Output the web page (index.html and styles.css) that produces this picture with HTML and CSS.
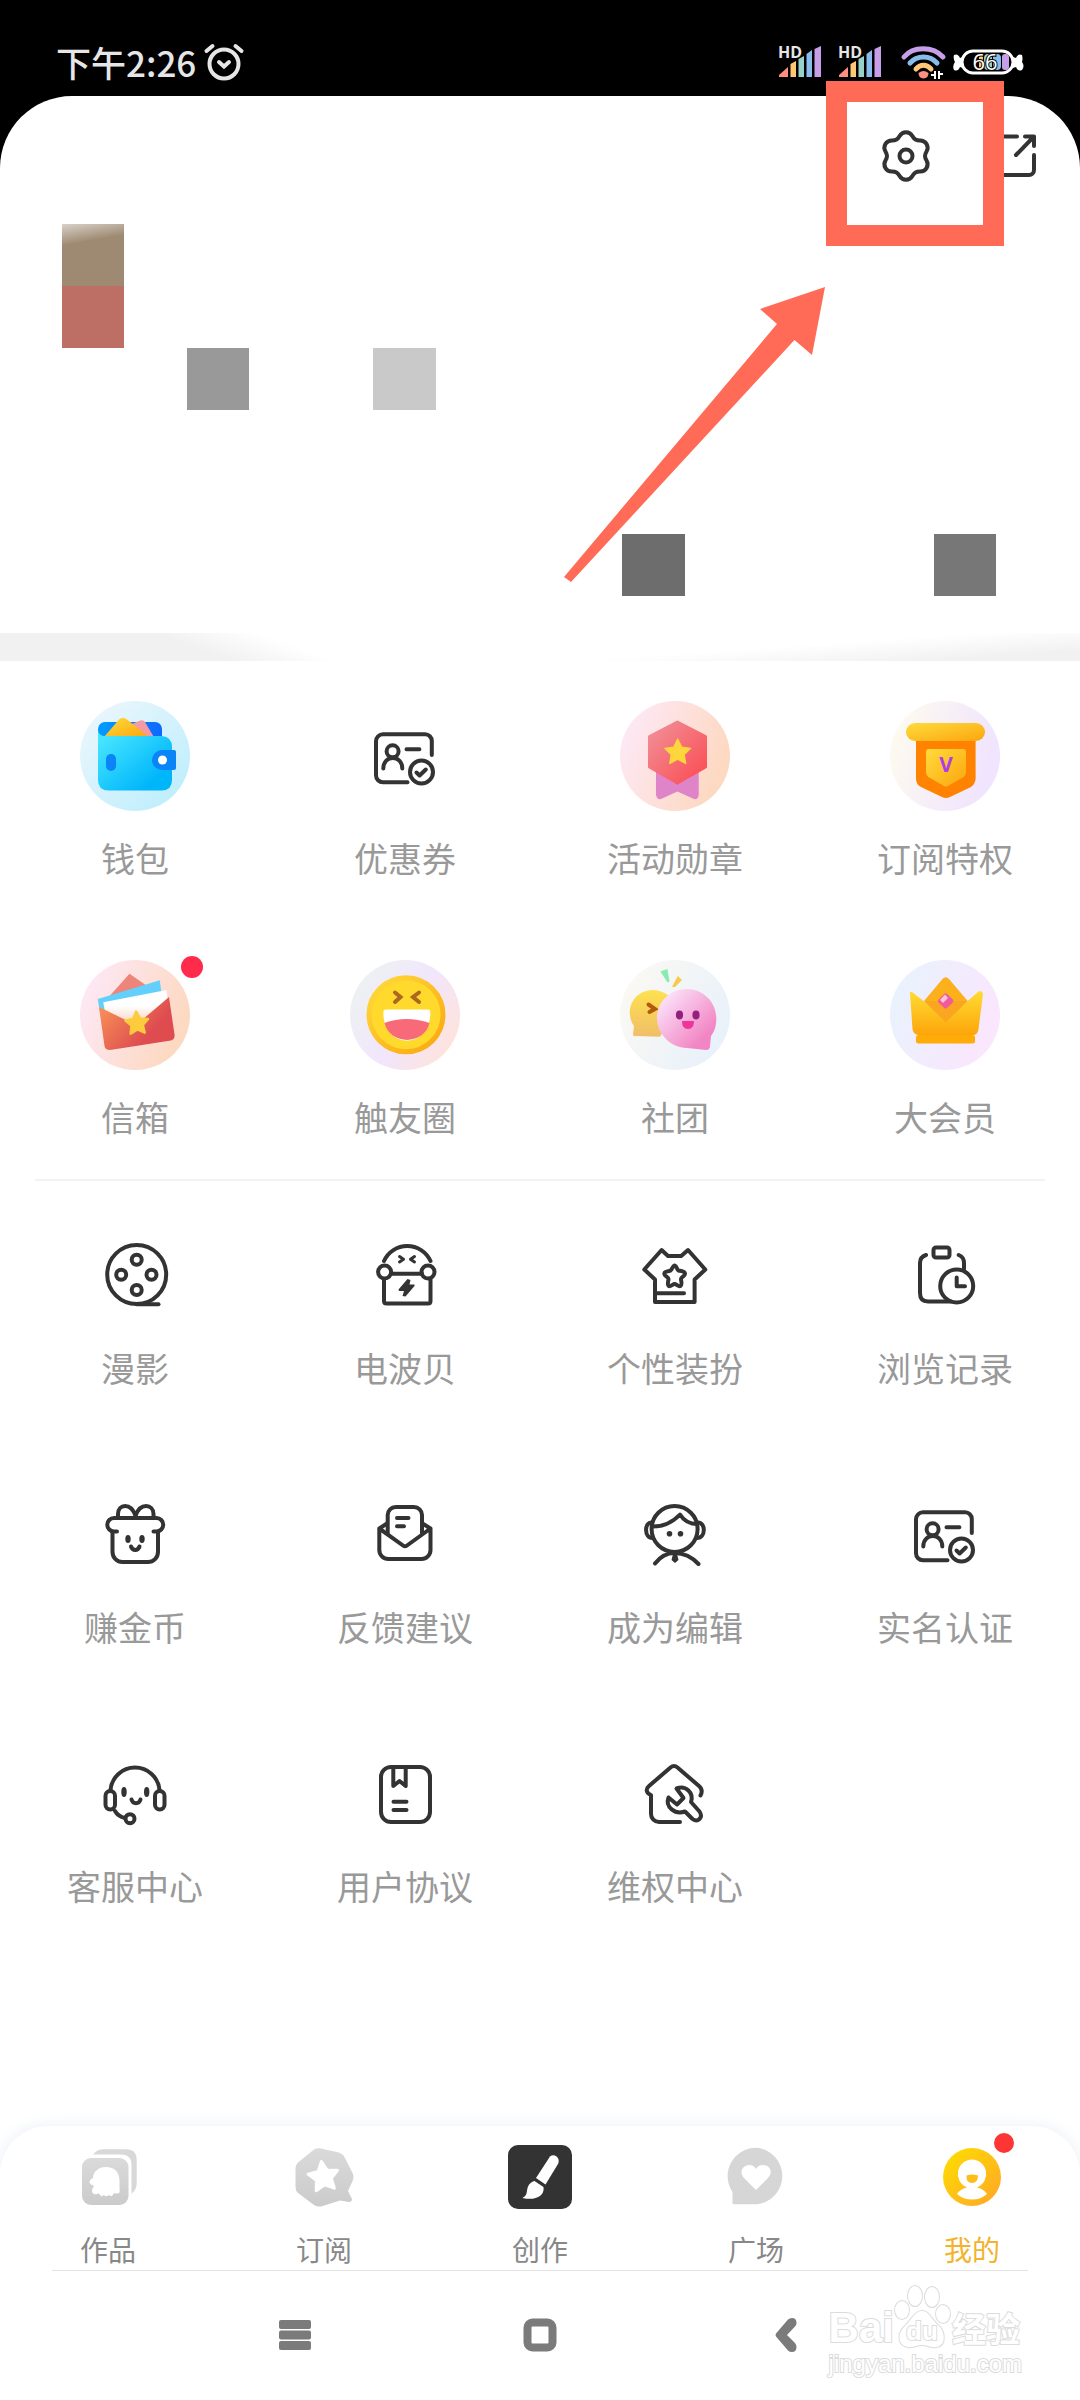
FILE: index.html
```html
<!DOCTYPE html>
<html lang="zh-CN">
<head>
    <meta charset="UTF-8">
    <meta name="viewport" content="width=device-width, initial-scale=1.0">
    <title>我的</title>
    <link rel="stylesheet" href="styles.css">
</head>
<body>

<!-- shared shapes -->
<svg class="defs" width="0" height="0" aria-hidden="true">
    <defs>
        <path id="star" d="M0-10 2.9-4 9.5-3.1 4.8 1.5 5.9 8.1 0 5-5.9 8.1-4.8 1.5-9.5-3.1-2.9-4Z"/>
        <symbol id="idcard" viewBox="0 0 80 80">
            <path d="M66.8 39V25a6.7 6.7 0 0 0-6.7-6.7H18a7 7 0 0 0-7 7V59.3a7 7 0 0 0 7 7H42.5"/>
            <circle cx="27.6" cy="35.3" r="6"/>
            <path d="M18.3 52.5c0-14 19-14 19 0M41.5 33.3H54.4"/>
            <circle cx="56.5" cy="56" r="11.5"/>
            <path d="M51.5 56.5 54.6 59.5 60.8 53.5"/>
        </symbol>
        <symbol id="signal" viewBox="0 0 44 36">
            <path fill="#ff8f80" d="M1 33V31L10 23V33Z"/>
            <path fill="#ffc876" d="M12.500 33V20L18 17V33Z"/>
            <path fill="#96d2c8" d="M20.500 33V15L26 12V33Z"/>
            <path fill="#86bdec" d="M28.500 33V10L34 6V33Z"/>
            <path fill="#c79ee8" d="M36.500 33V5L43 2V33Z"/>
        </symbol>
        <linearGradient id="bgBlue" x2="1" y2="1"><stop stop-color="#f0f7fd"/><stop offset="1" stop-color="#b8edfc"/></linearGradient>
        <linearGradient id="bgPeach" x2="1" y2=".4"><stop stop-color="#fdeafc"/><stop offset="1" stop-color="#fdd9c2"/></linearGradient>
        <linearGradient id="bgLilac" x2="1" y2=".3"><stop stop-color="#fffdee"/><stop offset="1" stop-color="#f0e4fe"/></linearGradient>
        <linearGradient id="bgMist" x2="1" y2=".6"><stop stop-color="#ecf5ee"/><stop offset=".6" stop-color="#f1e6fd"/><stop offset="1" stop-color="#fde3df"/></linearGradient>
        <linearGradient id="bgPale" x2="1" y2=".5"><stop stop-color="#fdfaf2"/><stop offset="1" stop-color="#e9f1fa"/></linearGradient>
        <linearGradient id="bgSky" x2="1" y2=".4"><stop stop-color="#e6f4fd"/><stop offset="1" stop-color="#fae6fd"/></linearGradient>
        <linearGradient id="cyan" x2="1" y2="1"><stop offset=".1" stop-color="#46e4ff"/><stop offset=".8" stop-color="#00b6fa"/></linearGradient>
        <linearGradient id="blue" x2="1"><stop stop-color="#009cff"/><stop offset="1" stop-color="#1068ff"/></linearGradient>
        <linearGradient id="gold" x2="1" y2="1"><stop stop-color="#ffdb3c"/><stop offset="1" stop-color="#fba60e"/></linearGradient>
        <linearGradient id="coral" x2="1" y2="1"><stop stop-color="#f1929a"/><stop offset="1" stop-color="#fb4a50"/></linearGradient>
        <linearGradient id="mailRed" x2="1" y2=".6"><stop stop-color="#fb9a58"/><stop offset=".8" stop-color="#de4c50"/></linearGradient>
        <linearGradient id="letter" x2="0" y2="1"><stop offset=".4" stop-color="#fff"/><stop offset="1" stop-color="#f2c2a8"/></linearGradient>
        <linearGradient id="pink" x2="1" y2="1"><stop offset=".1" stop-color="#fbe4fa"/><stop offset=".8" stop-color="#f285c4"/></linearGradient>
        <linearGradient id="sand" x2="0" y2="1"><stop stop-color="#ffe14f"/><stop offset="1" stop-color="#f0be68"/></linearGradient>
        <linearGradient id="crown" x2="0" y2="1"><stop stop-color="#ffdc32"/><stop offset="1" stop-color="#fda50a"/></linearGradient>
        <linearGradient id="me" x2="1" y2="1"><stop stop-color="#ffdf00"/><stop offset="1" stop-color="#ffa528"/></linearGradient>
        <linearGradient id="grey" x2="0" y2="1"><stop stop-color="#dadada"/><stop offset="1" stop-color="#cbcbcb"/></linearGradient>
    </defs>
</svg>

<header class="status">
    <div class="status-left">
        <span>下午2:26</span>
        <svg width="40" height="38" viewBox="0 0 40 38" fill="none" stroke="#e6e6e6" stroke-width="4" stroke-linecap="round">
            <circle cx="20" cy="21" r="14.500"/>
            <path d="M2.500 8 8.500 3M37.500 8 31.500 3M15 19 20 23.500 25 19"/>
        </svg>
    </div>
    <div class="status-right">
        <div class="signal"><span class="hd">HD</span><svg width="44" height="36"><use href="#signal"/></svg></div>
        <div class="signal"><span class="hd">HD</span><svg width="44" height="36"><use href="#signal"/></svg></div>
        <div class="power">
            <svg width="48" height="36" viewBox="0 0 48 36" fill="none" stroke-width="5" stroke-linecap="round">
                <path stroke="#c79ee8" d="M6 13C15 2 35 2 45 13"/>
                <path stroke="#86bdec" d="M12 19C19 11 32 11 39 19"/>
                <path stroke="#ffc876" d="M18 25C22 20 29 20 33 25"/>
                <path fill="#ff8f80" d="M20.500 29q5-4 10 0q0 5-5 5.500q-5-.5-5-5.500"/>
                <path stroke="#fff" stroke-width="2" stroke-linecap="butt" d="M33 31H37V35M37 35V27M41 35V27M41 30H45"/>
            </svg>
            <svg width="72" height="30" viewBox="0 0 72 30">
                <path fill="#fff" d="M11 10 8 11Q6 6 2 8Q1 12 3 15Q0 19 2 23Q6 25 8 20L11 21ZM61 10 64 11Q66 6 70 8Q71 12 70 15Q73 19 70 23Q66 25 64 20L61 21Z"/>
                <rect x="10" y="4" width="51" height="22" rx="11" fill="#000" stroke="#fff" stroke-width="3"/>
                <rect x="27" y="7" width="4" height="16" rx="2" fill="#ffc876"/>
                <rect x="32" y="7" width="8" height="16" rx="4" fill="#96d2c8"/>
                <rect x="41" y="7" width="8" height="16" rx="4" fill="#86bdec"/>
                <rect x="50" y="7" width="7" height="16" rx="3" fill="#c79ee8"/>
                <text x="33" y="23" class="battery-text">66</text>
            </svg>
        </div>
    </div>
</header>

<main class="page">
    <section class="profile">
        <div class="actions">
            <button class="icon-button" aria-label="设置">
                <svg class="line" width="56" height="56" viewBox="-28 -28 56 56">
                    <path d="M0-23.800C7-23.800 5.200-19 9.500-16.500S17.100-18 20.600-11.900 19-5 19 0 24.100 5.800 20.600 11.900 13.800 14 9.500 16.500 7 23.800 0 23.800-5.200 19-9.500 16.500-17.100 18-20.600 11.900-19 5-19 0-24.100-5.800-20.600-11.900-13.800-14-9.500-16.500-7-23.800 0-23.800Z"/>
                    <circle r="6.500"/>
                </svg>
            </button>
            <button class="icon-button" aria-label="分享">
                <svg class="line" width="48" height="56" viewBox="0 0 48 56">
                    <path d="M27 8.500H9a5 5 0 0 0-5 5V42a5 5 0 0 0 5 5H39a5 5 0 0 0 5-5V27M35 8.500H44V18M44 8.500 26 27"/>
                </svg>
            </button>
        </div>
        <div class="mosaic">
            <span class="tile tan"></span>
            <span class="tile red"></span>
            <span class="tile name"></span>
            <span class="tile level"></span>
            <span class="tile follow"></span>
            <span class="tile fans"></span>
        </div>
        <div class="highlight"></div>
        <svg class="arrow" width="262" height="296" viewBox="0 0 262 296">
            <path fill="#ff6b57" d="M0 290 213 37 196 22 261 0 248 68 230.500 53 7 295Z"/>
        </svg>
    </section>

    <div class="strip"></div>

    <nav class="menu menu-color">
        <a class="item" href="#">
            <svg width="110" height="110" viewBox="0 0 110 110">
                <circle cx="55" cy="55" r="55" fill="url(#bgBlue)"/>
                <rect x="18" y="21" width="64" height="30" rx="7" fill="url(#blue)"/>
                <path fill="#f59aa4" d="M52 23 59 20Q63 18 65 21L75 38H52Z"/>
                <path fill="url(#gold)" d="M24 36 39 18.500Q43 15 47 18.500L69 36Z"/>
                <path fill="url(#cyan)" d="M18 29Q19 35 25 35H82Q92 36 92 46V79Q92 89 82 89.500H28Q18 89 18 79Z"/>
                <path fill="#0a84f6" d="M82 49H94Q96 49 96 51V67Q96 69 94 69H82a10 10 0 0 1 0-20Z"/>
                <circle cx="82.500" cy="59" r="4.500" fill="#fff"/>
                <rect x="26" y="53" width="10" height="17" rx="5" fill="#0a84f6"/>
            </svg>
            <span class="label">钱包</span>
        </a>
        <a class="item" href="#">
            <svg class="line" width="110" height="110" viewBox="-15 -15 110 110"><use href="#idcard" width="80" height="80"/></svg>
            <span class="label">优惠券</span>
        </a>
        <a class="item" href="#">
            <svg width="110" height="110" viewBox="0 0 110 110">
                <circle cx="55" cy="55" r="55" fill="url(#bgPeach)"/>
                <path fill="#df84c8" d="M36 60H78.700V94Q78 99 74 98L57.400 90.500 41 98Q37 99 36 94Z"/>
                <path fill="url(#coral)" stroke="url(#coral)" stroke-width="3" stroke-linejoin="round" d="M57.400 21 85.500 35.500V66L57.400 82 29.500 66V35.500Z"/>
                <use href="#star" transform="translate(57.700 51.500) scale(1.350)" fill="#fdd63c" stroke="#fdd63c" stroke-linejoin="round"/>
            </svg>
            <span class="label">活动勋章</span>
        </a>
        <a class="item" href="#">
            <svg width="110" height="110" viewBox="0 0 110 110">
                <circle cx="55" cy="55" r="55" fill="url(#bgLilac)"/>
                <path fill="#ff8200" d="M26 36H85.600V78Q85 83 81 86L60 96Q56 98 52 96L31 86Q26 83 26 78Z"/>
                <rect x="16" y="22" width="79" height="18" rx="9" fill="url(#gold)"/>
                <path fill="url(#gold)" d="M39 48H73Q76 48 76 51V71Q76 75 72 77L58 85Q56 86 54 85L40 77Q36 75 36 71V51Q36 48 39 48Z"/>
                <text x="56" y="71" class="privilege-text">V</text>
            </svg>
            <span class="label">订阅特权</span>
        </a>
        <a class="item" href="#">
            <svg width="110" height="110" viewBox="0 0 110 110">
                <circle cx="55" cy="55" r="55" fill="url(#bgPeach)"/>
                <path fill="#ee857a" d="M49.500 13.700 26 40 80 35Z"/>
                <path fill="#62d0fb" d="M17.800 39 79.800 20.300 83 45 22 65Z"/>
                <path fill="url(#letter)" d="M23.300 42.300 86.700 30 89 60 28 70Z"/>
                <path fill="url(#mailRed)" d="M19 47 50 62Q56 63 62 60L89 37 94.600 75Q95 79 91 80.500L30 90Q25 90 24.500 86Z"/>
                <use href="#star" transform="translate(57 63.500) rotate(-4) scale(1.200)" fill="#fccc3c" stroke="#fccc3c" stroke-width="2" stroke-linejoin="round"/>
            </svg>
            <span class="dot"></span>
            <span class="label">信箱</span>
        </a>
        <a class="item" href="#">
            <svg width="110" height="110" viewBox="0 0 110 110">
                <circle cx="55" cy="55" r="55" fill="url(#bgMist)"/>
                <circle cx="56" cy="54.700" r="37" fill="#ffd92b" stroke="url(#gold)" stroke-width="5"/>
                <path fill="none" stroke="#ab681e" stroke-width="4" stroke-linecap="round" d="M45 32.500 50.500 37 45 42M69 32.500 63 37 69 42"/>
                <path fill="#fff" d="M36 49.500H78Q80.400 49.500 80.400 52.500C80 90 33.500 90 33.300 52.500Q33.300 49.500 36 49.500Z"/>
                <path fill="#f96a78" d="M34.500 63Q56 55 79.500 63C74 85.500 40 85.500 34.500 63Z"/>
            </svg>
            <span class="label">触友圈</span>
        </a>
        <a class="item" href="#">
            <svg width="110" height="110" viewBox="0 0 110 110">
                <circle cx="55" cy="55" r="55" fill="url(#bgPale)"/>
                <path fill="#86ecb0" d="M40.500 11.500 47.400 9 49.500 21.500 47.500 22.500Z"/>
                <path fill="#f8c94a" d="M57.700 16 62 20 55 27 52 27Z"/>
                <path fill="url(#sand)" d="M33 30C10 31 5 54 14 66L13 74Q13 77 16 76L40 76.700 56 50Q52 31 33 30Z"/>
                <path fill="none" stroke="#b25a0e" stroke-width="4" stroke-linecap="round" d="M28.500 44.500 35 49 29.500 52"/>
                <path fill="url(#pink)" d="M67 29C50 29 37 42 37 58S51 88 67 88L86 90Q90 90 90 86L91 76C95 71 96.300 65 96.300 58 96.300 42 83 29 67 29Z"/>
                <ellipse cx="59.500" cy="55" rx="3.600" ry="4.400" fill="#93207f"/>
                <ellipse cx="76" cy="55" rx="3.600" ry="4.400" fill="#93207f"/>
                <path fill="#f0359a" d="M62 61H74Q74 69 68 69T62 61Z"/>
            </svg>
            <span class="label">社团</span>
        </a>
        <a class="item" href="#">
            <svg width="110" height="110" viewBox="0 0 110 110">
                <circle cx="55" cy="55" r="55" fill="url(#bgSky)"/>
                <path fill="url(#crown)" d="M20 33Q20 31 22 32L40 46H72L88 32Q92 29 93 34L88.500 69Q88 74 84 75H28Q23 74 22.500 69Z"/>
                <rect x="26" y="75" width="59" height="8.500" rx="2.500" fill="#ffab08"/>
                <path fill="#fbb01c" d="M52.500 19Q55.700 15.500 59 19L77.700 41 55.700 62.300 34 41Z"/>
                <path fill="#f9982a" d="M34 41H77.700L55.700 62.300Z" opacity=".4"/>
                <rect x="-6" y="-6" width="12" height="12" rx="2" transform="translate(55.700 41) rotate(45)" fill="#ee5a9c"/>
                <path fill="#fbc4d8" d="M50 40 55 34.500 58 38 53 43Z"/>
            </svg>
            <span class="label">大会员</span>
        </a>
    </nav>

    <hr class="divider">

    <nav class="menu menu-line">
        <a class="item" href="#">
            <svg class="line" width="80" height="80" viewBox="0 0 80 80">
                <circle cx="41.700" cy="39.500" r="29.500"/>
                <circle cx="41.700" cy="24.700" r="5"/><circle cx="26.200" cy="39.700" r="5"/>
                <circle cx="56.500" cy="39.700" r="5"/><circle cx="41.700" cy="55" r="5"/>
                <path d="M41.700 69.300H63.500"/>
            </svg>
            <span class="label">漫影</span>
        </a>
        <a class="item" href="#">
            <svg class="line" width="80" height="80" viewBox="0 0 80 80">
                <path d="M19 26A25.500 25.500 0 0 1 65.500 26M26 38.700H57M19 44V66Q19 68.500 21.500 68.500H63Q65.500 68.500 65.500 66V44"/>
                <circle cx="19.600" cy="37" r="6.500"/><circle cx="63" cy="37" r="6.500"/>
                <path stroke-width="3" d="M34.500 21.500 38.500 24.300 34.500 27M49.500 21.500 45.500 24.300 49.500 27"/>
                <path class="solid" d="M42.500 44 33.500 54.500 34 56H39L37.500 61 40.500 61.500 49.500 51V49.500H44.500L45.500 45Z"/>
            </svg>
            <span class="label">电波贝</span>
        </a>
        <a class="item" href="#">
            <svg class="line" width="80" height="80" viewBox="0 0 80 80">
                <path d="M26.600 15 33 21H46.200L53 15 70.300 34.500 59.600 44.500V67H20V44.500L9.300 34.500ZM20 58.300H49"/>
                <path d="M39.600 30.500C42 31 42 35 43.500 35.500S49.500 36 50 38.500 46 42 46 44 47.500 50 45.500 51 41.500 49 39.600 49 35.500 52 33.700 51 33.500 46 33.500 44 29 41 29.300 38.500 34 36.500 35.500 35.500 37.500 31 39.600 30.500Z"/>
            </svg>
            <span class="label">个性装扮</span>
        </a>
        <a class="item" href="#">
            <svg class="line" width="80" height="80" viewBox="0 0 80 80">
                <rect x="28.500" y="12.500" width="16" height="10" rx="2.500"/>
                <path d="M21 20Q15 22 15 28V58Q15 66.500 23 66.500H46M53.700 20Q59 22 59 28V34"/>
                <circle cx="51.700" cy="51" r="16.500"/>
                <path d="M51.700 42.500V51.300H60"/>
            </svg>
            <span class="label">浏览记录</span>
        </a>
        <a class="item" href="#">
            <svg class="line" width="80" height="80" viewBox="0 0 80 80">
                <path d="M23 23V20C23 10 36 8 40.500 22C45 8 58.500 10 58.500 20V23"/>
                <path d="M22 37.500H19a6.700 6.700 0 0 1 0-13.500H61.500a6.700 6.700 0 0 1 0 13.500H58.500"/>
                <path d="M17.500 38V58a10 10 0 0 0 10 10H53a10 10 0 0 0 10-10V38M36 52.500C37.500 57 43 57 44.500 52.500"/>
                <ellipse class="solid" cx="33" cy="45" rx="2.700" ry="4"/><ellipse class="solid" cx="47" cy="45" rx="2.700" ry="4"/>
            </svg>
            <span class="label">赚金币</span>
        </a>
        <a class="item" href="#">
            <svg class="line" width="80" height="80" viewBox="0 0 80 80">
                <path d="M22.700 39V21a8 8 0 0 1 8-8H49a8 8 0 0 1 8 8V39"/>
                <path d="M14.300 34.500V56a9 9 0 0 0 9 9H56.500a9 9 0 0 0 9-9V34.500L42 51.500Q40 53 38 51.500ZM14.300 34.500 22 29.500M65.500 34.500 57.500 29.500"/>
                <path d="M32 24H43.500M32 32.300H39"/>
            </svg>
            <span class="label">反馈建议</span>
        </a>
        <a class="item" href="#">
            <svg class="line" width="80" height="80" viewBox="0 0 80 80">
                <circle cx="39.600" cy="35" r="23"/>
                <path d="M17 28.500C9 28 9 44 17.500 44M62.500 28.500C71 28 71 44 62 44"/>
                <path d="M17.500 32.500C28 32.500 38 28 45 20.500C49 27 55 30 62 30M20 69.500Q28 59 39.600 59Q53 59 63.500 70"/>
                <circle class="solid" cx="34.500" cy="39.700" r="2.800"/><circle class="solid" cx="45.500" cy="39.700" r="2.800"/>
                <path class="solid" d="M38 60H42L43.500 66 40 69 36.500 66Z"/>
            </svg>
            <span class="label">成为编辑</span>
        </a>
        <a class="item" href="#">
            <svg class="line" width="80" height="80"><use href="#idcard"/></svg>
            <span class="label">实名认证</span>
        </a>
        <a class="item" href="#">
            <svg class="line" width="80" height="80" viewBox="0 0 80 80">
                <path d="M15.500 37A24.600 24.600 0 0 1 64.500 37M20 58Q23 63.500 30 65"/>
                <rect x="10.500" y="38" width="9.500" height="18.500" rx="4.700"/><rect x="60" y="38" width="9.500" height="18.500" rx="4.700"/>
                <circle cx="35" cy="65.700" r="4.500"/>
                <path d="M36.500 46.500C38 51.500 44 51.500 45.500 46.500"/>
                <ellipse class="solid" cx="29" cy="39" rx="2.700" ry="5"/><ellipse class="solid" cx="51.700" cy="39" rx="2.700" ry="5"/>
            </svg>
            <span class="label">客服中心</span>
        </a>
        <a class="item" href="#">
            <svg class="line" width="80" height="80" viewBox="0 0 80 80">
                <rect x="16" y="14" width="49" height="55" rx="10"/>
                <path d="M28.300 15V33L34.500 28 40.700 33V15M28.500 48.700H41.500M28.500 57H41.500"/>
            </svg>
            <span class="label">用户协议</span>
        </a>
        <a class="item" href="#">
            <svg class="line" width="80" height="80" viewBox="0 0 80 80">
                <path d="M45 69H24a8 8 0 0 1-8-8V42C11 40 10.500 36 14 33L35.500 14.500Q39 11.500 42.500 14.500L64 33Q68.500 37 65.500 42.500"/>
                <path d="M41.500 35.500C51 32 59 40 56 49L64.500 58.500Q67.500 63 64.500 66T57.500 66L50 58.500C40 62 30 54 33.500 44.500L42 51.500 48.500 45Z"/>
            </svg>
            <span class="label">维权中心</span>
        </a>
    </nav>
</main>

<footer class="bottom">
    <nav class="tabs">
        <a class="tab" href="#">
            <svg width="64" height="64" viewBox="0 0 64 64">
                <path fill="#d8d8d8" d="M17 9.500Q21 4.300 28 4.300H50Q60.700 4.300 60.700 15V38Q60.700 45 55.500 48.500V20Q55.500 9.500 45 9.500Z"/>
                <rect x="6" y="13" width="46.500" height="47" rx="9" fill="url(#grey)"/>
                <path fill="#fff" d="M30 22C21 22 17 28 17 33Q11 36 15 39.500L18 41Q14 47 18 49Q21 50 23 48Q24 53 28 50Q30 52.500 33 50Q36 53 38 48Q45 50 43.500 44V36Q43 22 30 22Z"/>
            </svg>
            <span class="tab-label">作品</span>
        </a>
        <a class="tab" href="#">
            <svg width="64" height="64" viewBox="0 0 64 64">
                <path fill="url(#grey)" d="M22 4.500Q25 2.500 29 3.500L47 7.500Q51 9 53 13L61 29Q62 32 61 35L56 46 60 54Q60 57 57 57L48 55.500 29 61.500Q25 62 22 60L6 48Q3.500 46 3.500 42V23Q3.500 20 6 17.500Z"/>
                <use href="#star" transform="translate(31.500 32) rotate(-8) scale(1.550)" fill="#fff" stroke="#fff" stroke-width="2" stroke-linejoin="round"/>
            </svg>
            <span class="tab-label">订阅</span>
        </a>
        <a class="tab" href="#">
            <svg width="64" height="64" viewBox="0 0 64 64">
                <rect width="64" height="64" rx="10" fill="#333"/>
                <path fill="#fff" d="M42 11.500Q45 9 48.500 11.500T50 19L37.500 39.500 28 33Z"/>
                <path fill="#fff" d="M26.500 36 35.500 42C37 51 27 56 14.500 53C20 50 18 47 20 41.500Q22 37 26.500 36Z"/>
            </svg>
            <span class="tab-label">创作</span>
        </a>
        <a class="tab" href="#">
            <svg width="64" height="64" viewBox="0 0 64 64">
                <path fill="#d6d6d6" d="M32.300 2.700a28.400 28.400 0 0 1 0 56.600H9.500Q8.500 59.300 8.500 58V47A28.400 28.400 0 0 1 32.300 2.700Z"/>
                <path fill="#fff" d="M32 45 20 33C14 26 20 20 25 20Q30 20 32 24Q34 20 39 20C45 20 50 26 44 33Z"/>
            </svg>
            <span class="tab-label">广场</span>
        </a>
        <a class="tab active" href="#">
            <svg width="64" height="64" viewBox="0 0 64 64">
                <circle cx="32" cy="32" r="29" fill="url(#me)"/>
                <path fill="#fff" d="M32 14.500a14.500 14.500 0 0 1 5 28Q44 44 47 49 41 54.500 32 54.500T17 49Q20 44 27 42.500A14.500 14.500 0 0 1 32 14.500Z"/>
                <path fill="#fdbd1a" d="M26.500 30.500Q32 28.500 38 30.500Q38 38 32 38T26.500 30.500Z"/>
            </svg>
            <span class="tab-dot"></span>
            <span class="tab-label">我的</span>
        </a>
    </nav>
    <div class="system">
        <button class="icon-button" aria-label="最近任务">
            <svg width="34" height="34" viewBox="0 0 34 34" fill="#7b7b7b">
                <rect x="1" y="2" width="32" height="9" rx="2"/><rect x="1" y="12.500" width="32" height="9" rx="2"/><rect x="1" y="23" width="32" height="9" rx="2"/>
            </svg>
        </button>
        <button class="icon-button" aria-label="主屏幕">
            <svg width="34" height="34" viewBox="0 0 34 34">
                <rect x="4.500" y="4.500" width="25" height="25" rx="5" fill="none" stroke="#7b7b7b" stroke-width="8"/>
            </svg>
        </button>
        <button class="icon-button" aria-label="返回">
            <svg width="34" height="34" viewBox="0 0 34 34">
                <path fill="#7b7b7b" d="M20 1.500Q21.500 0 24 0 28.500 0 28.500 5 28.500 7 27 8.500L19 17 27 25Q28.500 27 28.500 29 28.500 34 24 34 21.500 34 20 32.500L8 18.500Q7 17 8 15.500Z"/>
            </svg>
        </button>
        <div class="watermark">
            <div class="brand">
                <span class="bai">Bai</span>
                <svg width="58" height="66" viewBox="0 0 58 66" fill="#fff" stroke="#dcdcdc" stroke-width="2">
                    <ellipse cx="8" cy="26" rx="7" ry="9"/><ellipse cx="21" cy="12" rx="7" ry="10"/>
                    <ellipse cx="38" cy="13" rx="7" ry="10"/><ellipse cx="49" cy="30" rx="7" ry="9"/>
                    <path d="M28 27C35 27 37 35 44 41S53 62 42 63C36 64 34 61 28 61S20 64 14 63C3 61 3 49 12 41C18 35 21 27 28 27Z"/>
                    <text x="28" y="56" class="du">du</text>
                </svg>
                <span class="jingyan">经验</span>
            </div>
            <span class="url">jingyan.baidu.com</span>
        </div>
    </div>
</footer>

</body>
</html>
```
FILE: styles.css
```css
* {
    box-sizing: border-box;
}
body {
    margin: 0;
    min-height: 100vh;
    display: flex;
    flex-direction: column;
    background-color: #fff;
    font-family: "Noto Sans CJK SC", "Noto Sans", sans-serif;
}
svg {
    display: block;
    overflow: visible;
}
.defs {
    position: absolute;
}

/* status bar, its black runs on behind the rounded page corners */
.status {
    display: flex;
    justify-content: space-between;
    align-items: center;
    padding: 38px 56px 82px;
    background-color: #000;
    color: #e6e6e6;
}
.status-left {
    display: flex;
    align-items: center;
    gap: 8px;
    font-size: 35px;
    font-weight: 500;
    line-height: 48px;
}
.status-right {
    display: flex;
    align-items: center;
    gap: 16px;
}
.signal {
    position: relative;
}
.hd {
    position: absolute;
    top: 0;
    left: 0;
    font: bold 16px/16px "Open Sans", sans-serif;
}
.power {
    display: flex;
    align-items: center;
    gap: 6px;
}
.battery-text {
    font: 22px "Open Sans", sans-serif;
    fill: #fff;
    stroke: #000;
    stroke-width: 2px;
    paint-order: stroke;
    text-anchor: middle;
}

/* profile */
.page {
    flex: 1 0 auto;
    margin-top: -72px;
    background-color: #fff;
    border-radius: 72px 72px 0 0;
}
.profile {
    position: relative;
    padding: 32px 0 37px;
}
.actions {
    display: flex;
    justify-content: flex-end;
    gap: 56px;
    padding-right: 42px;
}
.icon-button {
    padding: 0;
    border: none;
    background: none;
    cursor: pointer;
}
.line {
    fill: none;
    stroke: #333;
    stroke-width: 4px;
    stroke-linecap: round;
    stroke-linejoin: round;
}
.solid {
    fill: #333;
    stroke: none;
}
.mosaic {
    display: grid;
    grid-template-columns: repeat(17, 1fr);
    grid-template-rows: repeat(6, 62px);
    margin-top: 40px;
    padding-right: 22px;
}
.tan {
    grid-area: 1 / 2;
    background: linear-gradient(170deg, #d9d2c9, #9e8a72 30%);
}
.red {
    grid-area: 2 / 2;
    background-color: #be6f65;
}
.name {
    grid-area: 3 / 4;
    background-color: #999;
}
.level {
    grid-area: 3 / 7;
    background-color: #c9c9c9;
}
.follow {
    grid-area: 6 / 11;
    background-color: #6d6d6d;
}
.fans {
    grid-area: 6 / 16;
    background-color: #777;
}
.highlight {
    position: absolute;
    top: -15px;
    right: 76px;
    width: 178px;
    height: 165px;
    border: 21px solid #ff6b57;
    pointer-events: none;
}
.arrow {
    position: absolute;
    top: 191px;
    right: 254px;
}
.strip {
    height: 28px;
    background:
        linear-gradient(20deg, #f1f1f1 20%, transparent 29%),
        linear-gradient(176deg, transparent 66%, #f1f1f1 90%);
}

/* menus */
.menu {
    display: grid;
    grid-template-columns: repeat(4, 1fr);
}
.menu-color {
    padding: 40px 0 38px;
    row-gap: 78px;
}
.menu-line {
    padding: 54px 0;
    row-gap: 102px;
}
.item {
    position: relative;
    display: flex;
    flex-direction: column;
    align-items: center;
    gap: 23px;
    color: #999;
    text-decoration: none;
}
.menu-line .item {
    gap: 29px;
}
.label {
    font-size: 34px;
    line-height: 48px;
}
.dot {
    position: absolute;
    top: -4px;
    left: calc(50% + 46px);
    width: 22px;
    height: 22px;
    border-radius: 50%;
    background-color: #ff2b4b;
}
.divider {
    height: 2px;
    margin: 0 35px;
    border: none;
    background-color: #f2f2f2;
}
.privilege-text {
    font: bold 21px "Open Sans", sans-serif;
    fill: #b03ce8;
    text-anchor: middle;
}

/* bottom bar */
.bottom {
    background-color: #fff;
    border-radius: 48px 48px 0 0;
    box-shadow: 0 0 16px #e9eef4;
}
.tabs {
    display: grid;
    grid-template-columns: repeat(5, 1fr);
    padding-top: 19px;
}
.tab {
    position: relative;
    display: flex;
    flex-direction: column;
    align-items: center;
    gap: 20px;
    padding-bottom: 1px;
    color: #888;
    text-decoration: none;
}
.tab-label {
    font-size: 28px;
    line-height: 40px;
}
.active {
    color: #f3b32c;
}
.tab-dot {
    position: absolute;
    top: -12px;
    left: calc(50% + 22px);
    width: 20px;
    height: 20px;
    border-radius: 50%;
    background-color: #fd3535;
}
.system {
    position: relative;
    display: flex;
    justify-content: center;
    gap: 211px;
    margin: 0 52px;
    padding: 47px 0 48px;
    border-top: 1px solid #e2e2e2;
}
.watermark {
    position: absolute;
    top: 13px;
    right: 6px;
    display: flex;
    flex-direction: column;
    align-items: flex-start;
    color: #fff;
    paint-order: stroke;
    -webkit-text-stroke: 2px #dcdcdc;
}
.brand {
    display: flex;
    align-items: flex-end;
}
.bai {
    font: bold 42px/44px "Liberation Sans", sans-serif;
}
.jingyan {
    font-size: 34px;
    font-weight: bold;
    line-height: 44px;
}
.du {
    font: bold 26px "Liberation Sans", sans-serif;
    text-anchor: middle;
    -webkit-text-stroke: 0;
    paint-order: stroke;
}
.url {
    font: 24px/28px "Liberation Sans", sans-serif;
}
```
